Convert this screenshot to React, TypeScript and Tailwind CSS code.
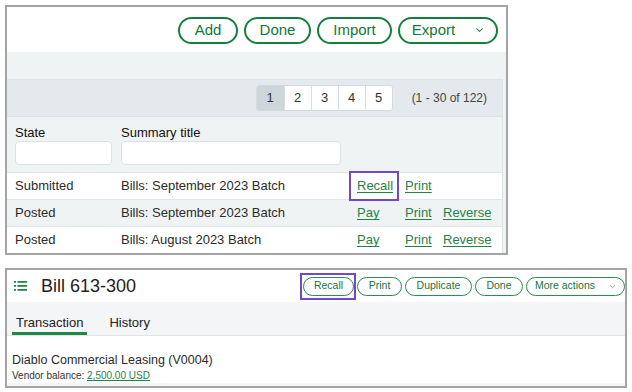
import React from 'react';

const font = { fontFamily: '"Liberation Sans", Arial, sans-serif' };

type Row = { state: string; title: string; actions: string[] };

const rows: Row[] = [
  { state: 'Submitted', title: 'Bills: September 2023 Batch', actions: ['Recall', 'Print'] },
  { state: 'Posted', title: 'Bills: September 2023 Batch', actions: ['Pay', 'Print', 'Reverse'] },
  { state: 'Posted', title: 'Bills: August 2023 Batch', actions: ['Pay', 'Print', 'Reverse'] },
];

function Chevron({ className }: { className?: string }) {
  return (
    <svg viewBox="0 0 10 6" className={className} fill="none" stroke="currentColor" strokeWidth="1.2">
      <path d="M1.5 1.2 5 4.6 8.5 1.2" />
    </svg>
  );
}

function PillButton({ label, chevron, w }: { label: string; chevron?: boolean; w: string }) {
  return (
    <button className={'flex h-[27px] items-center justify-center gap-[20px] rounded-full border-2 border-[#12803c] bg-white text-[15px] text-[#0f7a3a] ' + w}>
      <span>{label}</span>
      {chevron && <Chevron className="h-[6px] w-[9px] text-[#3d8a5a]" />}
    </button>
  );
}

function SmallButton({ label, chevron, w }: { label: string; chevron?: boolean; w: string }) {
  return (
    <button className={'flex h-[19px] items-center justify-center gap-[14px] rounded-full border-[1.5px] border-[#2a8c4f] bg-white text-[10.5px] text-[#17753c] ' + w}>
      <span>{label}</span>
      {chevron && <Chevron className="h-[5px] w-[7px] text-[#5a9a72]" />}
    </button>
  );
}

function ListIcon() {
  return (
    <svg viewBox="0 0 13 10" className="h-[10px] w-[13px]">
      <rect x="0" y="0" width="2" height="1.8" fill="#1f8a45" />
      <rect x="3.5" y="0" width="9.5" height="1.8" fill="#1f8a45" />
      <rect x="0" y="4" width="2" height="1.8" fill="#1f8a45" />
      <rect x="3.5" y="4" width="9.5" height="1.8" fill="#1f8a45" />
      <rect x="0" y="8" width="2" height="1.8" fill="#1f8a45" />
      <rect x="3.5" y="8" width="9.5" height="1.8" fill="#1f8a45" />
    </svg>
  );
}

function BatchList() {
  return (
    <div className="ml-[5px] mt-[5px] flex h-[250px] w-[503px] flex-col border-2 border-[#a4a4a4] bg-white">
      {/* toolbar */}
      <div className="flex h-[45px] items-center justify-end gap-[6px] pr-[8px] pt-[1px]">
        <PillButton label="Add" w="w-[60px]" />
        <PillButton label="Done" w="w-[67px]" />
        <PillButton label="Import" w="w-[75px]" />
        <PillButton label="Export" w="w-[100px]" chevron />
      </div>
      <div className="h-[27px] bg-[#f0f3f4]" />

      <div className="flex flex-1 bg-[#f0f3f4]">
        <div className="flex flex-1 flex-col">
          {/* pagination */}
          <div className="flex h-[37px] items-center justify-end border-t border-[#dfe5e8] bg-[#e3e9ec] pr-[15px]">
            <div className="flex h-[26px] overflow-hidden rounded-[3px] border border-[#d3dbdf] text-[13px] text-[#333]">
              {['1', '2', '3', '4', '5'].map((n, i) => (
                <div
                  key={n}
                  className={
                    'flex w-[27px] items-center justify-center ' +
                    (i > 0 ? 'border-l border-[#d8dfe3] ' : '') +
                    (i === 0 ? 'bg-[#cdd6db]' : 'bg-white')
                  }
                >
                  {n}
                </div>
              ))}
            </div>
            <span className="ml-[19px] text-[12px] text-[#444]">(1 - 30 of 122)</span>
          </div>

          {/* header with filters */}
          <div className="flex h-[56px] flex-col border-t border-[#dde3e6] bg-[#f0f3f4] px-[8px] pt-[8px]">
            <div className="flex text-[13px] leading-[15px] text-[#111]">
              <div className="w-[106px]">State</div>
              <div>Summary title</div>
            </div>
            <div className="mt-[1px] flex gap-[9px]">
              <div className="h-[24px] w-[97px] rounded-[4px] border border-[#dbe2e5] bg-white" />
              <div className="h-[24px] w-[220px] rounded-[4px] border border-[#dbe2e5] bg-white" />
            </div>
          </div>

          {/* rows */}
          {rows.map((row, i) => (
            <div
              key={i}
              className={
                'flex h-[27px] items-center border-t border-[#e1e6e9] px-[8px] text-[13px] text-[#2b2b2b] ' +
                (i === 1 ? 'bg-[#f0f3f4]' : 'bg-white')
              }
            >
              <div className="w-[106px]">{row.state}</div>
              <div className="w-[236px]">{row.title}</div>
              <div className="flex items-center">
                {row.actions.map((a, j) => (
                  <div key={a} className={j === 0 ? 'w-[48px]' : a === 'Print' ? 'w-[38px]' : ''}>
                    {a === 'Recall' ? (
                      <span className="relative inline-block">
                        <span className="text-[#1e8449] underline decoration-[#1e8449] underline-offset-2">{a}</span>
                        <span className="absolute -bottom-[5px] -left-[8px] -right-[6px] -top-[5px] border-2 border-[#6f47d1]" />
                      </span>
                    ) : (
                      <span className="text-[#1e8449] underline decoration-[#1e8449] underline-offset-2">{a}</span>
                    )}
                  </div>
                ))}
              </div>
            </div>
          ))}
        </div>
        <div className="w-[4px] border-l border-[#dfe4e7] bg-[#f0f3f4]" />
      </div>
    </div>
  );
}

function BillDetail() {
  return (
    <div className="ml-[5px] mt-[13px] flex h-[120px] w-[622px] flex-col border-2 border-[#a4a4a4] bg-[#f3f5f6]">
      <div className="flex h-[32px] items-center bg-white pl-[7px] pr-0">
        <ListIcon />
        <span className="ml-[14px] text-[18px] text-[#222]">Bill 613-300</span>
        <div className="ml-auto flex items-center gap-[3px]">
          <div className="relative">
            <SmallButton label="Recall" w="w-[51px]" />
            <span className="absolute -bottom-[4px] -left-[3px] -right-[2px] -top-[4px] border-2 border-[#6f47d1]" />
          </div>
          <SmallButton label="Print" w="w-[45px]" />
          <SmallButton label="Duplicate" w="w-[67px]" />
          <SmallButton label="Done" w="w-[48px]" />
          <SmallButton label="More actions" w="w-[99px]" chevron />
        </div>
      </div>

      {/* tabs */}
      <div className="flex h-[34px] items-end gap-[22px] border-b border-[#e0e5e8] px-[5px]">
        <div className="border-b-[3px] border-[#1f8a45] px-[4px] pb-[2px] text-[13px] leading-[14px] text-[#222]">Transaction</div>
        <div className="pb-[5px] text-[13px] leading-[14px] text-[#222]">History</div>
      </div>

      <div className="flex flex-col bg-white px-[5px] pt-[16px]">
        <div className="text-[12.5px] leading-[17px] text-[#2b2b2b]">Diablo Commercial Leasing (V0004)</div>
        <div className="text-[10px] leading-[14px] text-[#333]">
          Vendor balance: <span className="text-[#1e8449] underline underline-offset-1">2,500.00 USD</span>
        </div>
      </div>
    </div>
  );
}

export default function App() {
  return (
    <div className="h-[392px] w-[632px] overflow-hidden bg-white" style={font}>
      <BatchList />
      <BillDetail />
    </div>
  );
}
